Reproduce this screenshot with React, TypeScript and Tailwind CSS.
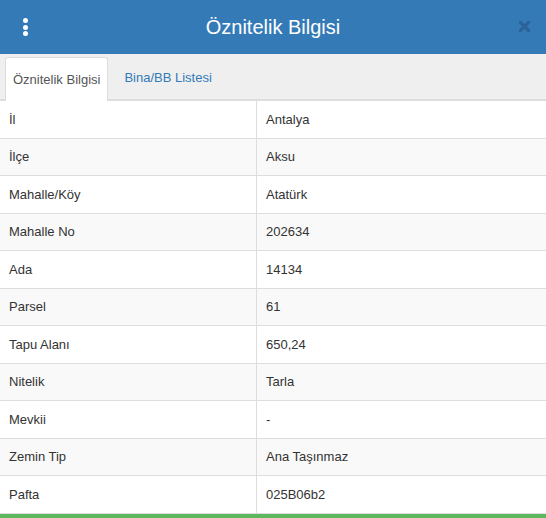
import { useState } from 'react';

// Attribute rows for the selected parcel
const rows = [
  { label: 'İl', value: 'Antalya' },
  { label: 'İlçe', value: 'Aksu' },
  { label: 'Mahalle/Köy', value: 'Atatürk' },
  { label: 'Mahalle No', value: '202634' },
  { label: 'Ada', value: '14134' },
  { label: 'Parsel', value: '61' },
  { label: 'Tapu Alanı', value: '650,24' },
  { label: 'Nitelik', value: 'Tarla' },
  { label: 'Mevkii', value: '-' },
  { label: 'Zemin Tip', value: 'Ana Taşınmaz' },
  { label: 'Pafta', value: '025B06b2' },
];

const tabs = ['Öznitelik Bilgisi', 'Bina/BB Listesi'];

export default function App() {
  const [activeTab, setActiveTab] = useState(0);

  return (
    <div
      className="flex h-[518px] w-[546px] flex-col overflow-hidden bg-white text-[13px] text-[#333]"
      style={{ fontFamily: '"Liberation Sans", Arial, sans-serif' }}
    >
      {/* Header */}
      <div className="relative flex h-[54px] shrink-0 items-center justify-center bg-[#337ab7]">
        <button className="absolute left-[22px] top-[17px] flex flex-col items-center gap-[1.5px] p-[1px]">
          <span className="h-[5px] w-[5px] rounded-full bg-white" />
          <span className="h-[5px] w-[5px] rounded-full bg-white" />
          <span className="h-[5px] w-[5px] rounded-full bg-white" />
        </button>
        <h1 className="pb-[1px] text-[20px] leading-none text-white">Öznitelik Bilgisi</h1>
        <button className="absolute right-[13px] top-[17px] flex h-[18px] w-[18px] items-center justify-center text-[#2b6399]">
          <svg viewBox="0 0 14 14" className="h-[13px] w-[13px]">
            <path d="M2.5 2.5 L11.5 11.5 M11.5 2.5 L2.5 11.5" stroke="currentColor" strokeWidth="3.4" strokeLinecap="round" />
          </svg>
        </button>
      </div>

      {/* Tabs */}
      <div className="flex h-[47px] shrink-0 items-end border-b-2 border-[#ddd] bg-[#efefef] pl-[5px]">
        {tabs.map((tab, i) => (
          <button
            key={tab}
            onClick={() => setActiveTab(i)}
            className={
              i === activeTab
                ? '-mb-[2px] h-[44px] rounded-t-[3px] border border-b-0 border-[#ddd] bg-white px-[7px] pt-[1px] text-[13px] text-[#555]'
                : 'h-[42px] px-[16px] text-[13px] text-[#337ab7]'
            }
          >
            {tab}
          </button>
        ))}
      </div>

      {/* Attribute table */}
      <div className="flex-1">
        {rows.map((row, i) => (
          <div
            key={row.label}
            className={`grid h-[37.5px] grid-cols-[257px_1fr] border-b border-[#ddd] ${i % 2 === 1 ? 'bg-[#f9f9f9]' : 'bg-white'}`}
          >
            <div className="flex items-center border-r border-[#ddd] px-[9px]">{row.label}</div>
            <div className="flex items-center px-[9px]">{row.value}</div>
          </div>
        ))}
      </div>

      {/* Status bar */}
      <div className="h-[5px] shrink-0 bg-[#5cb85c]" />
    </div>
  );
}
